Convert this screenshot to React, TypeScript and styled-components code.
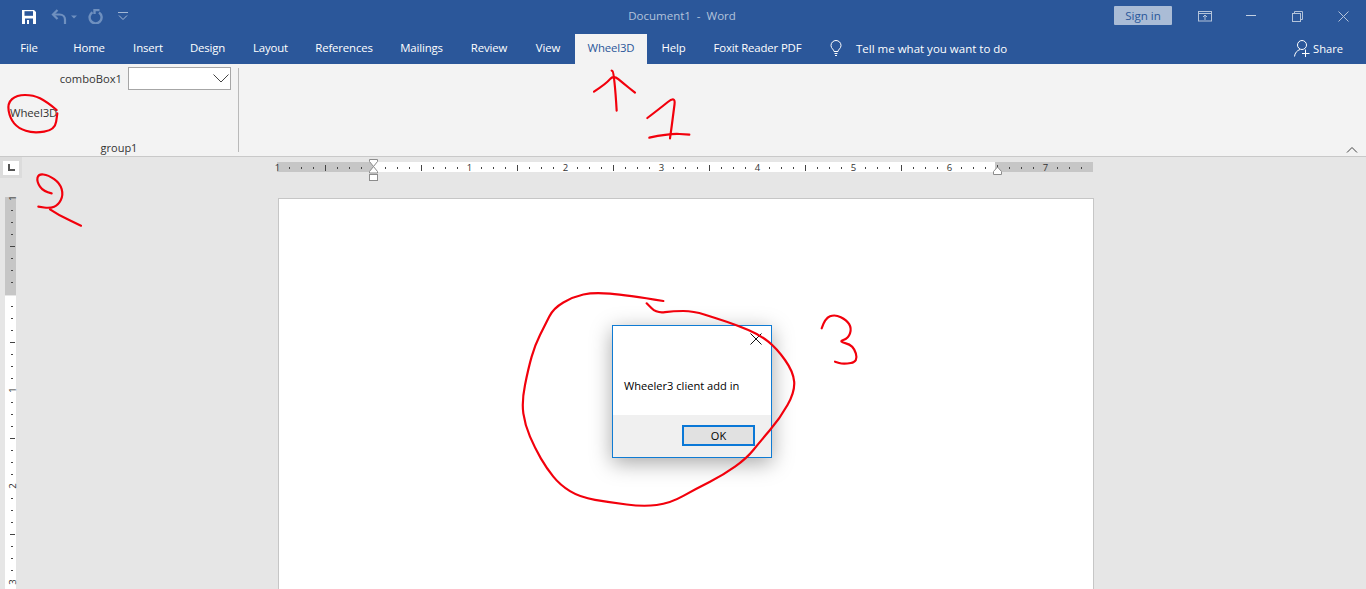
import React from "react";
import styled, { createGlobalStyle } from "styled-components";

const Global = createGlobalStyle`
  html, body { margin: 0; padding: 0; height: 100%; overflow: hidden; background: #e6e6e6; }
  #root { height: 100%; }
  * { box-sizing: border-box; }
`;

const FONT = `"Open Sans", "Noto Sans", "Liberation Sans", sans-serif`;

const Page = styled.div`
  position: relative; width: 1366px; height: 589px; overflow: hidden;
  font-family: ${FONT}; font-size: 12px; color: #333; background: #e6e6e6;
`;
const TitleBar = styled.div`
  height: 34px; background: #2b579a; display: flex; align-items: flex-start; color: #fff;
`;
const Qat = styled.div`
  flex: none; width: 512px; height: 33px; padding-left: 22px; display: flex; align-items: center;
`;
const QatSlot = styled.span<{ $w: number }>`
  width: ${p => p.$w}px; display: flex; align-items: center; justify-content: flex-start;
`;
const DocTitle = styled.div`
  flex: none; width: 340px; text-align: center; line-height: 32px; font-size: 11.5px; color: #b3c3da;
`;
const TitleRight = styled.div`
  flex: none; margin-left: 262px; height: 32px; display: flex; align-items: center;
`;
const SignIn = styled.div`
  width: 58px; height: 19px; margin-top: -1px; margin-right: 10px; background: #aabcd6; border-radius: 1px; color: #2b579a;
  font-size: 11.6px; line-height: 19px; text-align: center;
`;
const WinBtn = styled.span<{ $w: number }>`
  width: ${p => p.$w}px; display: flex; justify-content: center; align-items: center;
`;
const TabBar = styled.div`
  height: 30px; background: #2b579a; display: flex; align-items: stretch;
`;
const Tab = styled.div<{ $w: number; $active?: boolean }>`
  flex: none; width: ${p => p.$w}px; text-align: center; line-height: 28px; font-size: 11.4px; letter-spacing: -0.15px; white-space: nowrap;
  color: ${p => (p.$active ? "#2b579a" : "#fff")};
  background: ${p => (p.$active ? "#f3f3f3" : "transparent")};
`;
const TellMe = styled.div`
  flex: none; width: 479px; height: 28px; padding-left: 15px; display: flex; align-items: center; gap: 14px; color: #fff; font-size: 11.5px;
`;
const Share = styled.div`
  flex: none; display: flex; align-items: center; gap: 3px; height: 29px; color: #fff; font-size: 11.2px;
`;
const Ribbon = styled.div`
  height: 93px; background: #f3f3f3; border-bottom: 1px solid #c9c9c9; display: flex; position: relative;
`;
const Group = styled.div`
  width: 238px; height: 92px; display: flex; flex-direction: column; align-items: stretch;
`;
const GroupDivider = styled.div`
  width: 1px; height: 84px; margin-top: 4px; background: #b9b9b9;
`;
const ComboRow = styled.div`
  display: flex; justify-content: flex-end; align-items: center; gap: 6px; height: 23px; margin-top: 3px; padding-right: 7px;
  font-size: 11.2px; color: #333;
`;
const ComboLabel = styled.span`
  margin-top: 0;
`;
const Combo = styled.div`
  width: 103px; height: 23px; background: #fff; border: 1px solid #a6a6a6;
  display: flex; align-items: center; justify-content: flex-end; padding-right: 1px;
`;
const RibbonButton = styled.div`
  height: 24px; margin-top: 11px; padding-left: 10px; line-height: 24px; font-size: 11.4px; letter-spacing: -0.1px; color: #333;
`;
const GroupLabel = styled.div`
  margin-top: auto; height: 16px; line-height: 15px; text-align: center; font-size: 11px; color: #333;
`;
const Collapse = styled.div`
  position: absolute; right: 8px; bottom: 0; width: 12px; height: 10px; display: flex;
`;
const Work = styled.div`
  height: 432px; display: grid; grid-template-columns: 277px 1fr; grid-template-rows: 40px 1fr; background: #e6e6e6;
`;
const CornerBox = styled.div`
  width: 22px; height: 21px; background: #dcdcdc; display: flex; align-items: center; justify-content: center;
`;
const CornerInner = styled.div`
  width: 16px; height: 14px; background: #fff; display: flex; align-items: center; justify-content: center;
`;
const HRuler = styled.svg`
  display: block; margin-left: -4px; font-family: ${FONT};
`;
const VRulerCell = styled.div`
  padding-left: 5px; margin-top: -4px;
`;
const VRuler = styled.svg`
  display: block; font-family: ${FONT};
`;
const DocSheet = styled.div`
  width: 816px; height: 391px; margin: 1px 0 0 1px; background: #fff; border: 1px solid #c6c6c6; border-bottom: 0;
`;
const Dialog = styled.div`
  position: absolute; left: 612px; top: 325px; width: 160px; height: 133px; background: #fff;
  border: 1px solid #0f7bd3; box-shadow: 0 5px 20px rgba(0,0,0,.35); display: flex; flex-direction: column;
`;
const DialogBody = styled.div`
  flex: 1; position: relative; padding: 52px 0 0 11px; font-size: 11.1px; color: #000; line-height: 16px;
`;
const DialogClose = styled.div`
  position: absolute; right: 9px; top: 7px; width: 12px; height: 12px; display: flex;
`;
const DialogFoot = styled.div`
  height: 42px; background: #f0f0f0; display: flex; justify-content: flex-end; align-items: flex-start; padding: 10px 16px 0 0;
`;
const OkButton = styled.div`
  width: 73px; height: 21px; border: 2px solid #0a78d7; background: #e1e1e1; text-align: center;
  font-size: 11px; line-height: 18px; color: #000;
`;
const Scribbles = styled.svg`
  position: absolute; left: 0; top: 0; pointer-events: none;
`;

type P = [number, number];
const smooth = (pts: P[]) => {
  let d = `M${pts[0][0]} ${pts[0][1]}`;
  for (let i = 1; i < pts.length - 1; i++) {
    const mx = (pts[i][0] + pts[i + 1][0]) / 2;
    const my = (pts[i][1] + pts[i + 1][1]) / 2;
    d += ` Q${pts[i][0]} ${pts[i][1]} ${mx} ${my}`;
  }
  const l = pts[pts.length - 1];
  return d + ` L${l[0]} ${l[1]}`;
};
const Ink = ({ x, y, lines }: { x: number; y: number; lines: P[][] }) => (
  <g transform={`translate(${x} ${y}) scale(${1 / 3})`} fill="none" stroke="#f2000c" strokeWidth={6.5} strokeLinecap="round" strokeLinejoin="round">
    {lines.map((l, i) => <path key={i} d={smooth(l)} />)}
  </g>
);

const tabs: [string, number][] = [
  ["File", 58], ["Home", 62], ["Insert", 56], ["Design", 63], ["Layout", 63], ["References", 84],
  ["Mailings", 71], ["Review", 64], ["View", 54],
];
const tabs2: [string, number][] = [["Help", 53], ["Foxit Reader PDF", 115]];

const HorizontalRuler = () => {
  const ticks = [];
  for (let i = 1; i < 68; i++) {
    const x = i * 12;
    if (i % 8 === 0) {
      const n = (i - 8) / 8;
      if (n > 0) ticks.push(<text key={i} x={x + 0.5} y={9} fontSize={9.5} textAnchor="middle" fill="#333">{n}</text>);
    } else if (i % 4 === 0) {
      ticks.push(<rect key={i} x={x} y={3} width={1} height={6} fill="#444" />);
    } else {
      ticks.push(<rect key={i} x={x} y={5} width={1} height={2} fill="#444" />);
    }
  }
  return (
    <HRuler width={834} height={26} viewBox="-4 -3 834 26">
      <rect x={0} y={2} width={816} height={10} fill="#c6c6c6" />
      <rect x={96} y={2} width={622} height={10} fill="#fff" />
      <g transform="translate(0 2)">
        <text x={0.5} y={9} fontSize={9.5} textAnchor="middle" fill="#333">1</text>
        {ticks}
      </g>
      <path d="M92.5 -0.5h8v2l-4 5 4 5v1.5h-8v-1.5l4-5-4-5z" fill="#fff" stroke="#8c8c8c" />
      <rect x="92.5" y="14.5" width="8" height="6" fill="#fff" stroke="#8c8c8c" />
      <path d="M716.5 14.5v-3l4-4.5 4 4.5v3z" fill="#fff" stroke="#8c8c8c" />
    </HRuler>
  );
};

const VerticalRuler = () => {
  const items = [];
  for (let i = 1; i < 33; i++) {
    const y = i * 12 + 1;
    if (i % 8 === 0) {
      const n = (i - 8) / 8;
      if (n > 0) items.push(<text key={i} x={0} y={0} transform={`translate(10.5 ${y}) rotate(-90)`} fontSize={9.5} textAnchor="middle" fill="#333">{n}</text>);
    } else if (i % 4 === 0) {
      items.push(<rect key={i} x={5} y={y} width={5} height={1} fill="#444" />);
    } else {
      items.push(<rect key={i} x={6} y={y} width={2} height={1} fill="#444" />);
    }
  }
  return (
    <VRuler width={12} height={396} viewBox="0 -4 12 396">
      <rect x={0} y={0} width={11} height={98} fill="#c6c6c6" />
      <rect x={0} y={99} width={11} height={293} fill="#fff" />
      <text x={0} y={0} transform="translate(10.5 1) rotate(-90)" fontSize={9.5} textAnchor="middle" fill="#333">1</text>
      {items}
    </VRuler>
  );
};

export default function App() {
  return (
    <Page>
      <Global />
      <TitleBar>
        <Qat>
          <QatSlot $w={29}>
            <svg width="14" height="14" viewBox="0 0 14 14"><path d="M0 0h12l2 2v12H0z" fill="#fff" /><rect x="2.5" y="1.2" width="8.5" height="4.6" fill="#2b579a" /><rect x="3" y="8.5" width="8" height="5.5" fill="#2b579a" /><rect x="5" y="10" width="2" height="4" fill="#fff" /></svg>
          </QatSlot>
          <QatSlot $w={36}>
            <svg width="26" height="15" viewBox="0 0 26 15" fill="none" stroke="#6f90bf" strokeWidth="2.2"><path d="M6.5 1L2 5.5 6.5 10" /><path d="M2 5.5h6.5c3.5 0 5.5 2.5 5.5 5V15" /><path d="M20 6.5h6l-3 3z" fill="#6f90bf" stroke="none" /></svg>
          </QatSlot>
          <QatSlot $w={31}>
            <svg width="16" height="15" viewBox="0 0 16 15" fill="none" stroke="#6f90bf" strokeWidth="2.4"><path d="M5.5 3.2A6 6 0 1 0 12 3.4" /><path d="M7.5 0v5" /><path d="M7.5 1h5" /></svg>
          </QatSlot>
          <QatSlot $w={12}>
            <svg width="10" height="9" viewBox="0 0 10 9" fill="none" stroke="#a3b8d5"><path d="M0 .5h10" /><path d="M1 3.5L5 7.5l4-4" /></svg>
          </QatSlot>
        </Qat>
        <DocTitle>Document1&nbsp; -&nbsp; Word</DocTitle>
        <TitleRight>
          <SignIn>Sign in</SignIn>
          <WinBtn $w={46}>
            <svg width="14" height="11" viewBox="0 0 14 11" fill="none" stroke="#b3c3da"><rect x=".5" y=".5" width="13" height="9.5" /><path d="M.5 2.5h13" /><path d="M7 9V4M5 6l2-2 2 2" /></svg>
          </WinBtn>
          <WinBtn $w={46}>
            <svg width="11" height="2" viewBox="0 0 11 2"><rect width="10" height="1" fill="#c3d0e2" /></svg>
          </WinBtn>
          <WinBtn $w={46}>
            <svg width="11" height="11" viewBox="0 0 11 11" fill="none" stroke="#b3c3da"><rect x=".5" y="2.5" width="8" height="8" /><path d="M2.5 2.5v-2h8v8h-2" /></svg>
          </WinBtn>
          <WinBtn $w={46}>
            <svg width="11" height="11" viewBox="0 0 11 11" fill="none" stroke="#b3c3da"><path d="M.5.5l10 10M10.5.5l-10 10" /></svg>
          </WinBtn>
        </TitleRight>
      </TitleBar>
      <TabBar>
        {tabs.map(([t, w]) => <Tab key={t} $w={w}>{t}</Tab>)}
        <Tab $w={72} $active>Wheel3D</Tab>
        {tabs2.map(([t, w]) => <Tab key={t} $w={w}>{t}</Tab>)}
        <TellMe>
          <svg width="12" height="16" viewBox="0 0 12 16" fill="none" stroke="#fff"><path d="M4 11.5C4 9.5 1 8.5 1 5.5a5 5 0 0 1 10 0c0 3-3 4-3 6z" /><path d="M4.5 13.5h3M5 15.5h2" /></svg>
          <span>Tell me what you want to do</span>
        </TellMe>
        <Share>
          <svg width="16" height="17" viewBox="0 0 16 17" fill="none" stroke="#fff"><circle cx="8" cy="5" r="4.5" /><path d="M.5 16.5c.3-3.5 2.5-6 5.5-7" /><path d="M8 13.5h7.5M11.5 9.5v7.5" /></svg>
          <span>Share</span>
        </Share>
      </TabBar>
      <Ribbon>
        <Group>
          <ComboRow>
            <ComboLabel>comboBox1</ComboLabel>
            <Combo>
              <svg width="16" height="9" viewBox="0 0 16 9" fill="none" stroke="#444"><path d="M.5.5L8 8 15.5.5" /></svg>
            </Combo>
          </ComboRow>
          <RibbonButton>Wheel3D</RibbonButton>
          <GroupLabel>group1</GroupLabel>
        </Group>
        <GroupDivider />
        <Collapse>
          <svg width="12" height="8" viewBox="0 0 12 8" fill="none" stroke="#444"><path d="M1 6.5l5-5 5 5" /></svg>
        </Collapse>
      </Ribbon>
      <Work>
        <CornerBox>
          <CornerInner>
            <svg width="7" height="7" viewBox="0 0 7 7"><path d="M0 0h2v5h5v2H0z" fill="#555" /></svg>
          </CornerInner>
        </CornerBox>
        <HorizontalRuler />
        <VRulerCell><VerticalRuler /></VRulerCell>
        <DocSheet />
      </Work>
      <Dialog>
        <DialogBody>
          Wheeler3 client add in
          <DialogClose>
            <svg width="12" height="12" viewBox="0 0 12 12" fill="none" stroke="#111"><path d="M.5.5l11 11M11.5.5l-11 11" /></svg>
          </DialogClose>
        </DialogBody>
        <DialogFoot><OkButton>OK</OkButton></DialogFoot>
      </Dialog>
      <Scribbles width={1366} height={589} viewBox="0 0 1366 589">
        <Ink x={510} y={285} lines={[
          [[460,48],[350,30],[250,22],[190,35],[130,70],[105,120],[75,180],[55,250],[35,350],[45,420],[75,490],[110,550],[150,600],[210,637],[300,652],[400,665],[480,655],[560,610],[640,570],[710,520],[750,470],[810,400],[855,320],[850,260],[800,190],[750,150],[680,120],[620,100],[550,78],[490,78],[440,85],[410,55]],
          [[935,130],[945,100],[975,88],[1010,105],[1025,130],[1015,160],[985,170],[1030,180],[1045,230],[1000,238],[975,230]],
        ]} />
        <Ink x={0} y={60} lines={[
          [[170,150],[140,125],[100,105],[50,105],[22,130],[30,175],[55,205],[100,220],[165,210],[172,160]],
          [[155,400],[130,395],[110,365],[115,342],[145,345],[180,370],[190,405],[175,435],[150,445],[115,440]],
          [[150,448],[175,465],[243,497]],
        ]} />
        <Ink x={570} y={30} lines={[
          [[140,242],[137,190],[130,125],[125,122]],
          [[72,185],[110,160],[130,135],[160,160],[195,188]],
          [[232,264],[270,235],[317,197],[310,250],[305,290],[300,325]],
          [[238,323],[300,310],[358,314]],
        ]} />
      </Scribbles>
    </Page>
  );
}
